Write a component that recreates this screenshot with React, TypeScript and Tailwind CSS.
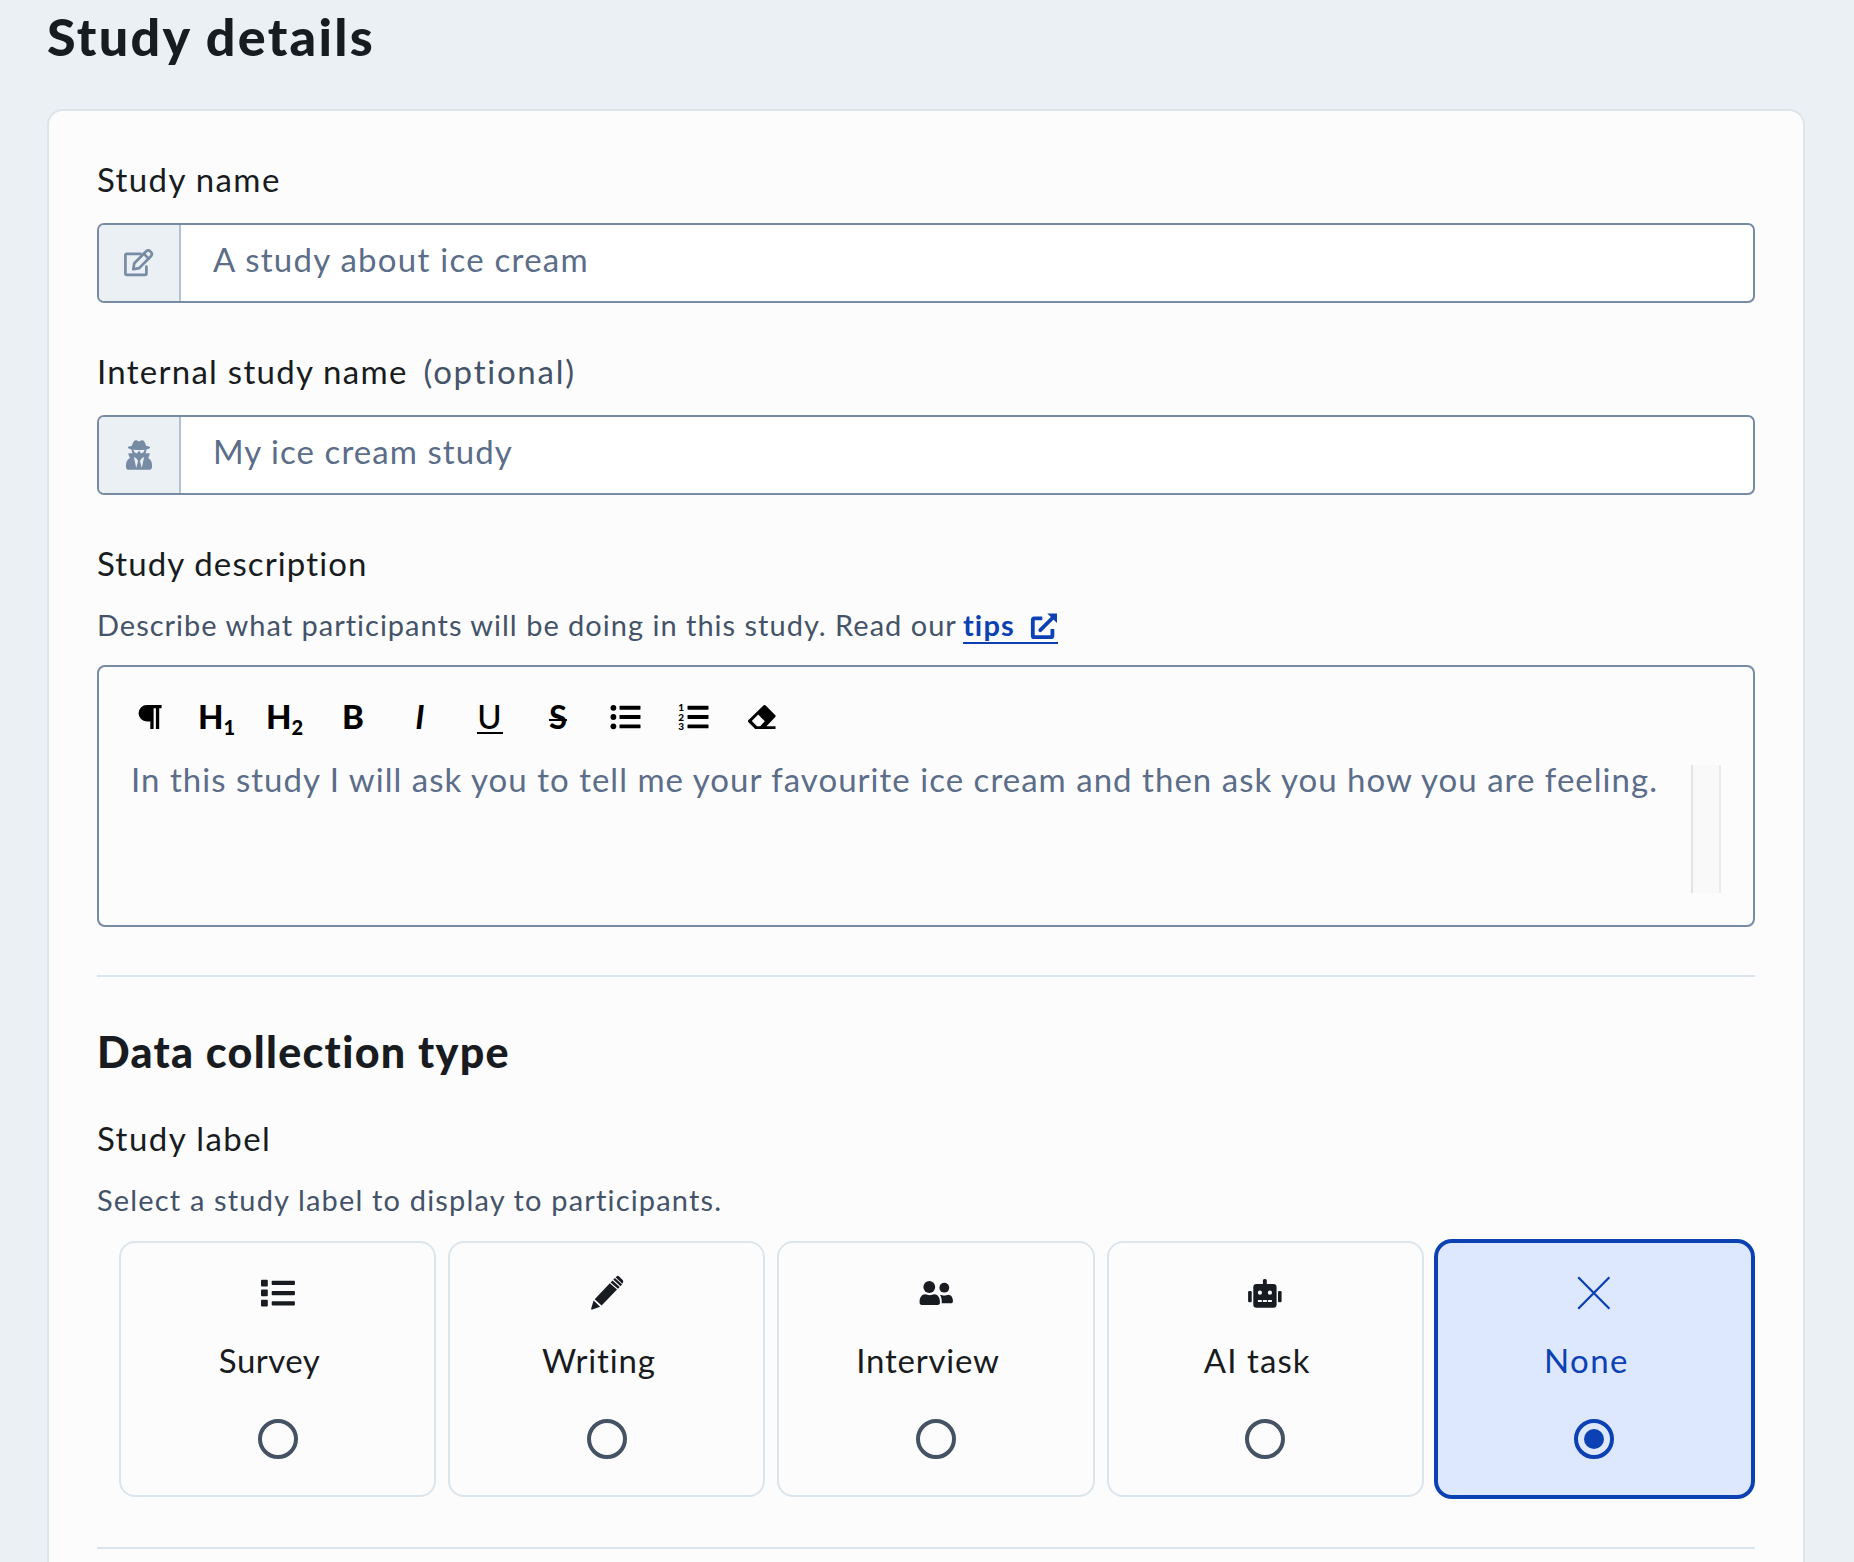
import type { ReactNode } from "react";
import { FaUserSecret } from "react-icons/fa";

function EditIcon() {
  return (
    <svg width="32" height="30" viewBox="0 0 32 30" fill="none" stroke="#778ba5" strokeWidth="2.7" strokeLinejoin="round" strokeLinecap="round">
      <path d="M17.5 5.8H3.6a1.2 1.2 0 0 0-1.2 1.2v18.7a1.2 1.2 0 0 0 1.2 1.2h18.6a1.2 1.2 0 0 0 1.2-1.2V18.6" />
      <path d="M10.3 21.3l1-6L23.3 3.2a2.6 2.6 0 0 1 3.8 0l1 1a2.6 2.6 0 0 1 0 3.8L16.2 20.1z" />
      <path d="M20.8 5.8l4.8 4.8" />
    </svg>
  );
}

function ExternalIcon() {
  return (
    <svg width="28" height="27" viewBox="0 0 28 27" fill="none" stroke="#0c41b4" strokeWidth="3.8">
      <path d="M12.3 5.4H4a1.2 1.2 0 0 0-1.2 1.2v16.4a1.2 1.2 0 0 0 1.2 1.2h17.2a1.2 1.2 0 0 0 1.2-1.2v-7" strokeLinejoin="round" />
      <path d="M10.3 17.2L22.5 5" strokeLinecap="round" />
      <path d="M17.3.4H27v9.7z" fill="#0c41b4" stroke="none" />
    </svg>
  );
}

function PilcrowIcon() {
  return (
    <svg width="68" height="40" viewBox="0 0 68 40">
      <path d="M30.8 9H45.6v3.2h-2.4v20.8h-3.300V12.200h-2.300V33H34.300v-7.500h-3.500a8.200 8.200 0 0 1 0-16.500z" />
    </svg>
  );
}

function ListLines() {
  return (
    <>
      <rect x="27.5" y="9.8" width="21" height="3.9" rx=".6" />
      <rect x="27.5" y="19" width="21" height="3.9" rx=".6" />
      <rect x="27.5" y="28.4" width="21" height="3.9" rx=".6" />
    </>
  );
}

function BulletsIcon() {
  return (
    <svg width="68" height="40" viewBox="0 0 68 40">
      <circle cx="21.4" cy="11.8" r="2.9" />
      <circle cx="21.4" cy="21" r="2.9" />
      <circle cx="21.4" cy="30.3" r="2.9" />
      <ListLines />
    </svg>
  );
}

function NumbersIcon() {
  return (
    <svg width="68" height="40" viewBox="0 0 68 40" className="text-[10px] font-black">
      <text x="18.2" y="14.9">1</text>
      <text x="18.2" y="24.6">2</text>
      <text x="18.2" y="34.200">3</text>
      <ListLines />
    </svg>
  );
}

function EraserIcon() {
  return (
    <svg width="68" height="40" viewBox="0 0 68 40">
      <path fillRule="evenodd" d="M35.4 9.5a1.6 1.6 0 0 1 2.3 0l9.4 9.4a1.6 1.6 0 0 1 0 2.3L38.4 30.2h9.1V33H27.2l-6.7-6.8a1.6 1.6 0 0 1 0-2.3zM30.2 18.4l-6.4 6.6 5.2 5.2h3.2l4.6-5z" />
    </svg>
  );
}

function SurveyIcon() {
  return (
    <svg width="36" height="36" viewBox="0 0 36 36" fill="currentColor">
      <rect x="1" y="4.8" width="6.8" height="6.6" rx="1" />
      <rect x="1" y="14.6" width="6.8" height="6.6" rx="1" />
      <rect x="1" y="24.8" width="6.8" height="6.6" rx="1" />
      <rect x="11.7" y="5.8" width="23.2" height="4.2" rx=".8" />
      <rect x="11.7" y="16" width="23.2" height="4.2" rx=".8" />
      <rect x="11.7" y="26.2" width="23.2" height="4.2" rx=".8" />
    </svg>
  );
}

function PencilIcon() {
  return (
    <svg width="36" height="36" viewBox="0 0 36 36" fill="currentColor">
      <path d="M20.8 8.3l7.2 6.2-15.4 16.1-6.9-6.4z" />
      <path d="M4.6 25.6l6.5 6.1-7.7 2.9a.9.9 0 0 1-1.2-1.1z" />
      <path d="M21.6 7.4l1.9-1.9 7.2 6.4-1.7 1.9z" />
      <path d="M24.3 4.6l1.6-1.6 7.2 6.5-1.6 1.7z" />
      <path d="M26.6 2.3l1-.9a1.9 1.9 0 0 1 2.5 0l3.6 3.7a2.1 2.1 0 0 1 .2 2.6l-.6 1z" />
    </svg>
  );
}

function PeopleIcon() {
  return (
    <svg width="36" height="36" viewBox="0 0 36 36" fill="currentColor">
      <circle cx="11.3" cy="12" r="5.9" />
      <path d="M1.6 26.6c0-4 2.2-7.3 5.5-7.3 1.6 0 2.4 1 4.6 1s3-1 4.6-1c3.3 0 5.6 3.3 5.6 7.3v1.2c0 1.3-.9 2.2-2.2 2.2H3.8c-1.3 0-2.2-.9-2.2-2.2z" />
      <circle cx="26.3" cy="12.7" r="4.9" />
      <path d="M22 19.7c1.8 0 2.4.8 4.3.8s2.5-.8 4.1-.8c2.6 0 4.5 2.8 4.5 5.9v.8c0 1.1-.8 1.9-1.9 1.9h-9.3c.2-3.6-.3-6.4-1.7-8.6z" />
    </svg>
  );
}

function RobotIcon() {
  return (
    <svg width="36" height="36" viewBox="0 0 36 36" fill="currentColor">
      <rect x="15.9" y="4" width="3.9" height="8" rx="1.5" />
      <rect x="1.1" y="16" width="3.6" height="11.2" rx="1.2" />
      <rect x="31" y="16" width="3.6" height="11.2" rx="1.2" />
      <path fillRule="evenodd" d="M9.5 9h16.9a3.2 3.2 0 0 1 3.2 3.2v17.3a3.2 3.2 0 0 1-3.2 3.2H9.5a3.2 3.2 0 0 1-3.2-3.2V12.2A3.2 3.2 0 0 1 9.5 9zM12.9 15.6a2.1 2.1 0 1 0 0 4.2 2.1 2.1 0 0 0 0-4.2zM22.9 15.6a2.1 2.1 0 1 0 0 4.2 2.1 2.1 0 0 0 0-4.2zM10.9 25v2h4v-2zM15.9 25v2h4v-2zM20.9 25v2h4v-2z" />
    </svg>
  );
}

function CrossIcon() {
  return (
    <svg width="36" height="36" viewBox="0 0 36 36" fill="none" stroke="currentColor" strokeWidth="2.3">
      <path d="M2.2 2.3l31.2 31.4M33.4 2.3L2.2 33.7" />
    </svg>
  );
}

function Field({ icon, children }: { icon: ReactNode; children: ReactNode }) {
  return (
    <div className="mt-6 flex h-20 overflow-hidden rounded-[7px] border-2 border-[#778ba5] bg-white">
      <div className="flex w-[82px] shrink-0 items-center justify-center border-r-2 border-[#b0c1d1] bg-[#ebf0f5]">{icon}</div>
      <div className="pt-[14px] pl-8 text-[33px] leading-10 text-[#5b6d88]">{children}</div>
    </div>
  );
}

function Tool({ children }: { children: ReactNode }) {
  return <button type="button" className="flex h-10 w-[68px] items-center justify-center text-[33px] leading-10 font-black">{children}</button>;
}

const options = [
  { label: "Survey", icon: <SurveyIcon />, track: "tracking-[0.49px]" },
  { label: "Writing", icon: <PencilIcon />, track: "tracking-[0.8px]" },
  { label: "Interview", icon: <PeopleIcon />, track: "tracking-[0.8px]" },
  { label: "AI task", icon: <RobotIcon />, track: "tracking-[1.07px]" },
  { label: "None", icon: <CrossIcon />, track: "tracking-[1.4px]", selected: true },
];

export default function App() {
  return (
    <main className="h-[1562px] w-[1854px] overflow-hidden bg-[#ebf0f5] px-[47px] pt-[6px] font-['Lato','Noto_Sans',sans-serif] text-[#181b20]">
      <h1 className="text-[52px] leading-[60px] font-black tracking-[2.3px]">Study details</h1>
      <section className="mt-[43px] mr-[2px] h-[1500px] rounded-[16px] border-2 border-[#dce5ec] bg-[#fcfcfd] p-12">
        <div className="text-[33px] leading-10 tracking-[1.38px]">Study name</div>
        <Field icon={<EditIcon />}><span className="tracking-[1.26px]">A study about ice cream</span></Field>

        <div className="mt-12 flex gap-4 text-[33px] leading-10">
          <span className="tracking-[1.27px]">Internal study name</span>
          <span className="tracking-[1.75px] text-[#445368]">(optional)</span>
        </div>
        <Field icon={<FaUserSecret className="h-[30px] w-[26px] text-[#778ba5]" />}><span className="tracking-[1.06px]">My ice cream study</span></Field>

        <div className="mt-12 text-[33px] leading-10 tracking-[1.12px]">Study description</div>
        <div className="mt-[25px] flex h-[34px] text-[29px] leading-[34px] whitespace-nowrap text-[#445368]">
          <span className="tracking-[1px]">Describe what participants will be doing in this study. Read our</span>
          <a href="#tips" className="ml-[6px] flex h-9 border-b-2 border-[#0c41b4] font-bold text-[#0c41b4]">
            <span className="tracking-[1.2px]">tips</span>
            <span className="mt-[5px] ml-[15px]"><ExternalIcon /></span>
          </a>
        </div>

        <div className="mt-[23px] h-[262px] rounded-[8px] border-2 border-[#778ba5] pt-[29px]">
          <div className="ml-[17px] flex text-black">
            <Tool><PilcrowIcon /></Tool>
            <Tool><span className="-ml-[3px]">H</span><span className="mt-[22px] text-[20px]">1</span></Tool>
            <Tool><span className="-ml-[3px]">H</span><span className="mt-[22px] text-[20px]">2</span></Tool>
            <Tool><span className="pr-[2px]">B</span></Tool>
            <Tool><span className="pr-[4px] font-bold italic">I</span></Tool>
            <Tool><span className="relative pr-px font-medium">U<i className="absolute top-[36px] right-0 left-0 h-[2px] bg-black" /></span></Tool>
            <Tool><span className="relative font-bold">S<i className="absolute top-[23px] right-0 left-0 h-[2px] bg-black" /></span></Tool>
            <Tool><BulletsIcon /></Tool>
            <Tool><NumbersIcon /></Tool>
            <Tool><EraserIcon /></Tool>
          </div>
          <div className="mt-[23px] flex justify-between px-8">
            <div className="text-[33px] leading-10 tracking-[1.024px] whitespace-nowrap text-[#5b6d88]">In this study I will ask you to tell me your favourite ice cream and then ask you how you are feeling.</div>
            <div className="mt-[6px] h-32 w-[30px] shrink-0 border-r-2 border-l-2 border-r-[#ebebeb] border-l-[#e3e3e3] bg-[#f9f9f9]" />
          </div>
        </div>

        <div className="mt-12 h-[2px] bg-[#dce5ec]" />

        <h2 className="mt-[50px] text-[43px] leading-[50px] font-black tracking-[1.3px]">Data collection type</h2>
        <div className="mt-[41px] text-[33px] leading-10 tracking-[1.45px]">Study label</div>
        <div className="mt-[25px] text-[29px] leading-[34px] tracking-[1.16px] text-[#445368]">Select a study label to display to participants.</div>

        <div className="mt-6 mr-[2px] ml-[22px] grid grid-cols-5 gap-3">
          {options.map((o) => (
            <label key={o.label} className={o.selected ? "flex h-64 flex-col items-center rounded-[16px] border-2 border-[#0c41b4] bg-[#dde8ff] pt-8 text-[#0c41b4] ring-2 ring-[#0c41b4]" : "flex h-64 flex-col items-center rounded-[16px] border-2 border-[#dce5ec] pt-8"}>
              {o.icon}
              <span className="mt-[29px] pr-4 text-[33px] leading-10"><span className={o.track}>{o.label}</span></span>
              <span className={o.selected ? "mt-[39px] flex size-10 items-center justify-center rounded-full border-4 border-[#0c41b4]" : "mt-[39px] size-10 rounded-full border-4 border-[#445264]"}>
                {o.selected && <span className="size-5 rounded-full bg-[#0c41b4]" />}
              </span>
            </label>
          ))}
        </div>

        <div className="mt-[50px] h-[2px] bg-[#dce5ec]" />
      </section>
    </main>
  );
}
